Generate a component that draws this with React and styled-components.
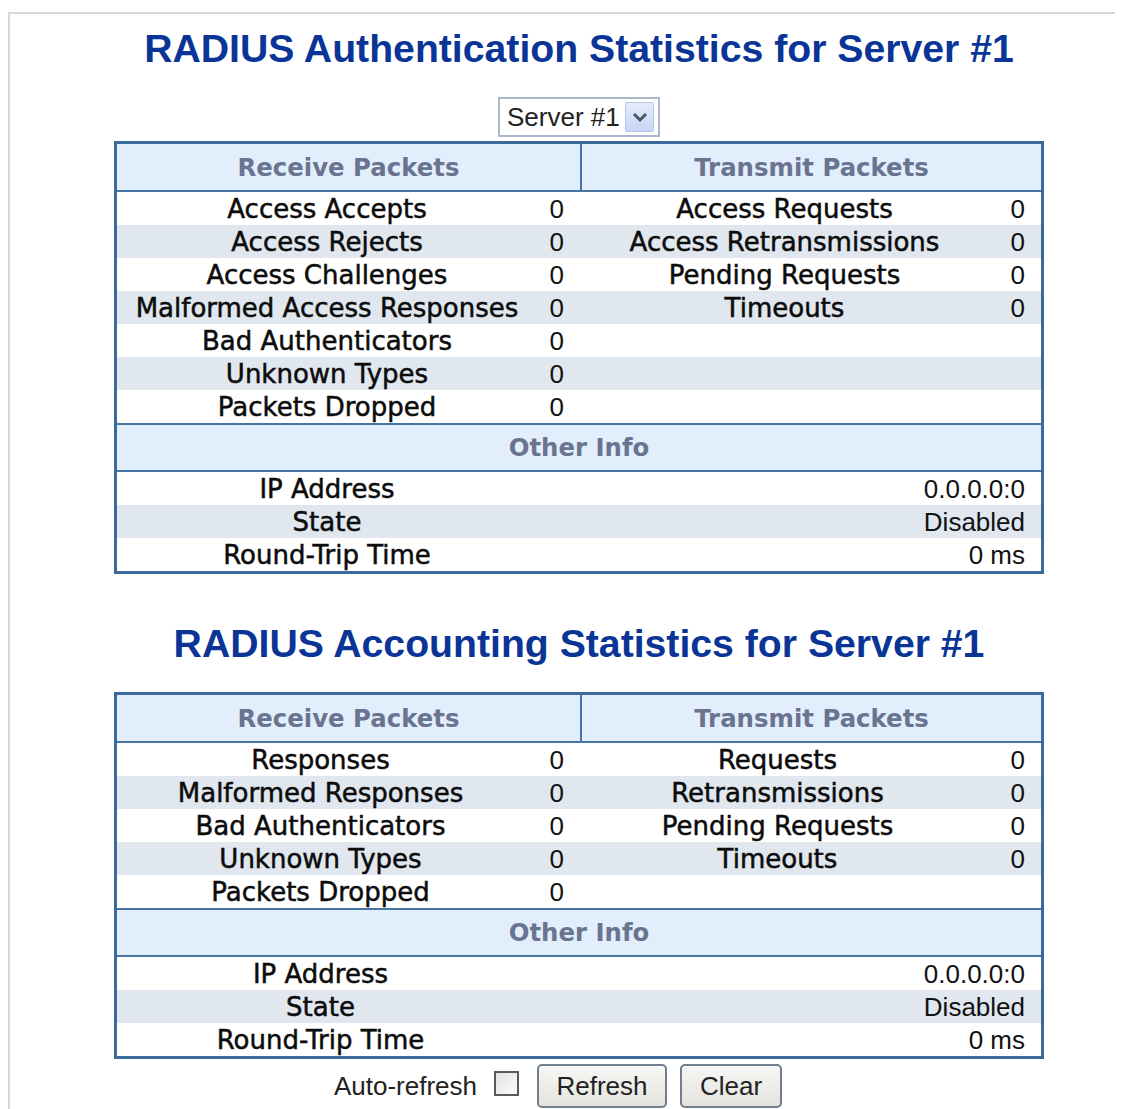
import React from 'react';
import styled, {createGlobalStyle} from 'styled-components';

const GlobalStyle = createGlobalStyle`
  body {
    margin: 8px;
    overflow: hidden;
    background: #fff;
    font-family: "Liberation Sans", Arial, sans-serif;
  }
`;

const Frame = styled.div`
  margin-top: 4px;
  width: 1138px;
  min-height: 1120px;
  border-top: 2px solid #d8d8d8;
  border-left: 2px solid #d8d8d8;
  display: flex;
  flex-direction: column;
  align-items: center;
`;

const Title = styled.h1`
  margin: ${p => p.$top}px 0 0;
  font-family: "Liberation Sans", Arial, sans-serif;
  font-weight: bold;
  font-size: 39.2px;
  line-height: 45px;
  color: #0a3597;
  white-space: nowrap;
`;

const Select = styled.div`
  margin-top: 26px;
  width: 162px;
  height: 40px;
  box-sizing: border-box;
  border: 2px solid #a9b9cb;
  background: #fff;
  display: flex;
  align-items: center;
  justify-content: space-between;
  padding: 0 4px 0 7px;
  font-size: 26px;
  color: #222;
`;

const Arrow = styled.span`
  width: 29px;
  height: 30px;
  border-radius: 2px;
  background: linear-gradient(#e4ecfb, #c7d6f6);
  border: 1px solid #b7c6e6;
  box-sizing: border-box;
  display: flex;
  align-items: center;
  justify-content: center;
`;

const Table = styled.table`
  margin-top: ${p => p.$top}px;
  width: 930px;
  border: 3px solid #3a6a9b;
  border-spacing: 0;
  table-layout: fixed;
  font-family: "DejaVu Sans", Verdana, sans-serif;
`;

const Head = styled.th`
  height: ${p => p.$h}px;
  padding: 0;
  background: #e2eefb;
  color: #6a7490;
  font-size: 24.4px;
  font-weight: bold;
  text-align: center;
  border-bottom: 2px solid #4775a5;
  border-top: ${p => (p.$lineTop ? '2px solid #4775a5' : 'none')};
  border-left: ${p => (p.$divider ? '2px solid #4775a5' : 'none')};
`;

const Row = styled.tr`
  height: 33px;
  background: ${p => (p.$alt ? '#e0e7ee' : '#fff')};
`;

const Label = styled.td`
  padding: 2px 0 0;
  text-align: center;
  font-size: 26px;
  color: #0c0c0c;
  -webkit-text-stroke: 0.5px #0c0c0c;
  white-space: nowrap;
  line-height: 31px;
`;

const Value = styled.td`
  padding: 2px 16px 0 0;
  text-align: right;
  font-family: "Liberation Sans", Arial, sans-serif;
  font-size: 26px;
  color: #111;
  line-height: 31px;
  white-space: nowrap;
`;

const Controls = styled.div`
  margin-top: 5px;
  display: flex;
  align-items: center;
  padding-right: 42px;
  font-size: 26px;
  color: #222;
`;

const Check = styled.span`
  margin: 0 18px 0 17px;
  width: 25px;
  height: 25px;
  box-sizing: border-box;
  border: 2px solid #5a5a5a;
  background: linear-gradient(135deg, #e2e2e2, #fbfbfb);
  position: relative;
  top: -3px;
`;

const Button = styled.button`
  height: 44px;
  width: ${p => p.$w}px;
  margin-right: ${p => p.$mr || 0}px;
  border: 2px solid #6f7f8f;
  border-radius: 5px;
  background: linear-gradient(#f7f7f5, #e3e3de);
  font-family: "Liberation Sans", Arial, sans-serif;
  font-size: 26px;
  color: #222;
  padding: 0;
`;

const StatsTable = ({top, cols, rx, tx, info}) => {
  const rows = Math.max(rx.length, tx.length);
  return (
    <Table $top={top}>
      <colgroup>
        {cols.map((w, i) => (
          <col key={i} style={{width: w}} />
        ))}
      </colgroup>
      <thead>
        <tr>
          <Head colSpan={2} $h={46}>Receive Packets</Head>
          <Head colSpan={2} $h={46} $divider>Transmit Packets</Head>
        </tr>
      </thead>
      <tbody>
        {Array.from({length: rows}).map((_, i) => (
          <Row key={i} $alt={i % 2 === 1}>
            <Label>{rx[i] ? rx[i][0] : ''}</Label>
            <Value>{rx[i] ? rx[i][1] : ''}</Value>
            <Label>{tx[i] ? tx[i][0] : ''}</Label>
            <Value>{tx[i] ? tx[i][1] : ''}</Value>
          </Row>
        ))}
        <tr>
          <Head colSpan={4} $h={45} $lineTop>Other Info</Head>
        </tr>
        {info.map(([k, v], i) => (
          <Row key={k} $alt={i % 2 === 1}>
            <Label>{k}</Label>
            <Value colSpan={3}>{v}</Value>
          </Row>
        ))}
      </tbody>
    </Table>
  );
};

const info = [['IP Address', '0.0.0.0:0'], ['State', 'Disabled'], ['Round-Trip Time', '0 ms']];

export default function App() {
  return (
    <>
      <GlobalStyle />
      <Frame>
        <Title $top={12}>RADIUS Authentication Statistics for Server #1</Title>
        <Select>
          <span>Server #1</span>
          <Arrow>
            <svg width="16" height="12" viewBox="0 0 16 12">
              <path d="M2 3 L8 9 L14 3" fill="none" stroke="#4a5564" strokeWidth="3" />
            </svg>
          </Arrow>
        </Select>
        <StatsTable
          top={4}
          cols={[420, 43, 409, 52]}
          rx={[
            ['Access Accepts', 0],
            ['Access Rejects', 0],
            ['Access Challenges', 0],
            ['Malformed Access Responses', 0],
            ['Bad Authenticators', 0],
            ['Unknown Types', 0],
            ['Packets Dropped', 0],
          ]}
          tx={[
            ['Access Requests', 0],
            ['Access Retransmissions', 0],
            ['Pending Requests', 0],
            ['Timeouts', 0],
          ]}
          info={info}
        />
        <Title $top={47}>RADIUS Accounting Statistics for Server #1</Title>
        <StatsTable
          top={26}
          cols={[407, 56, 395, 66]}
          rx={[
            ['Responses', 0],
            ['Malformed Responses', 0],
            ['Bad Authenticators', 0],
            ['Unknown Types', 0],
            ['Packets Dropped', 0],
          ]}
          tx={[
            ['Requests', 0],
            ['Retransmissions', 0],
            ['Pending Requests', 0],
            ['Timeouts', 0],
          ]}
          info={info}
        />
        <Controls>
          Auto-refresh
          <Check />
          <Button $w={130} $mr={13}>Refresh</Button>
          <Button $w={102}>Clear</Button>
        </Controls>
      </Frame>
    </>
  );
}
